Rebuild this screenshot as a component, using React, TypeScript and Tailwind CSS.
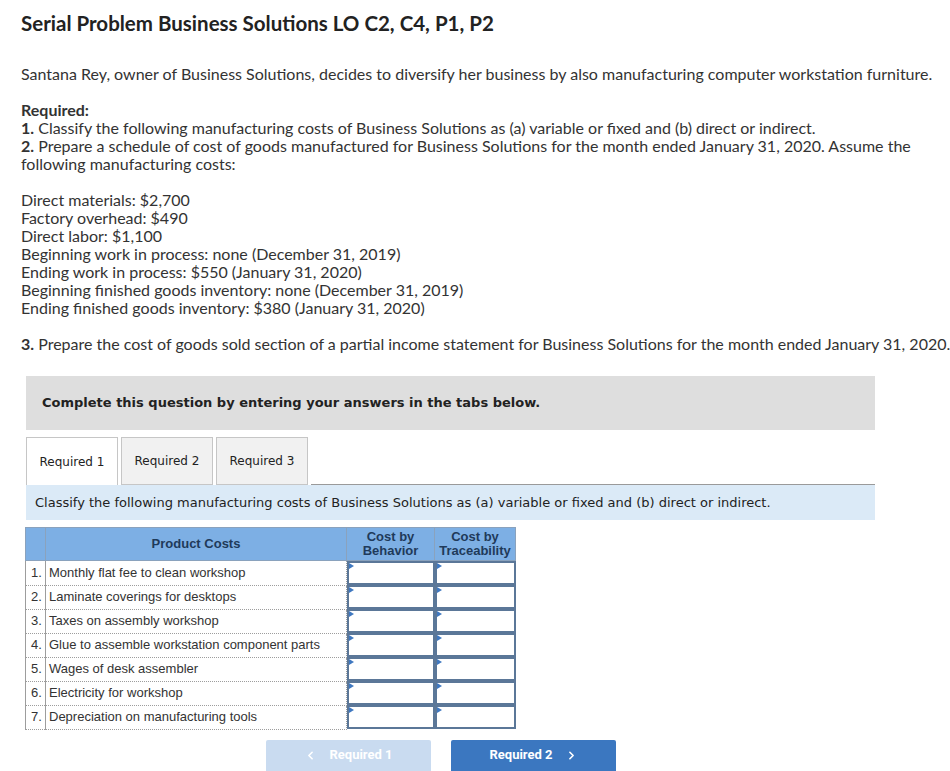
import React from "react";
import { ChevronLeft, ChevronRight } from "lucide-react";

const costs = [
  "Monthly flat fee to clean workshop",
  "Laminate coverings for desktops",
  "Taxes on assembly workshop",
  "Glue to assemble workstation component parts",
  "Wages of desk assembler",
  "Electricity for workshop",
  "Depreciation on manufacturing tools",
];

const givens = [
  "Direct materials: $2,700",
  "Factory overhead: $490",
  "Direct labor: $1,100",
  "Beginning work in process: none (December 31, 2019)",
  "Ending work in process: $550 (January 31, 2020)",
  "Beginning finished goods inventory: none (December 31, 2019)",
  "Ending finished goods inventory: $380 (January 31, 2020)",
];

function InputCell() {
  return (
    <td className="p-0">
      <div className="relative h-[24px] border-2 border-[#5b7798] bg-white">
        <span className="absolute left-0 top-0 h-0 w-0 border-y-[3px] border-l-[5px] border-y-transparent border-l-[#3f78c0]" />
      </div>
    </td>
  );
}

export default function App() {
  return (
    <div className="min-h-[771px] bg-white pl-[21px] pt-[11px] text-[16px] leading-[18px] text-[#333]" style={{ fontFamily: "Lato, 'Open Sans', sans-serif" }}>
      <h1 className="text-[20.5px] font-bold leading-[24px] text-[#222]">
        Serial Problem Business Solutions LO C2, C4, P1, P2
      </h1>

      <p className="mt-[30px] whitespace-nowrap">
        Santana Rey, owner of Business Solutions, decides to diversify her business by also manufacturing computer workstation furniture.
      </p>

      <div className="mt-[18px] whitespace-nowrap">
        <div className="font-bold">Required:</div>
        <div>
          <b>1.</b> Classify the following manufacturing costs of Business Solutions as (a) variable or fixed and (b) direct or indirect.
        </div>
        <div>
          <b>2.</b> Prepare a schedule of cost of goods manufactured for Business Solutions for the month ended January 31, 2020. Assume the
        </div>
        <div>following manufacturing costs:</div>
      </div>

      <div className="mt-[18px] whitespace-nowrap">
        {givens.map((g) => (
          <div key={g}>{g}</div>
        ))}
      </div>

      <div className="mt-[18px] whitespace-nowrap">
        <b>3.</b> Prepare the cost of goods sold section of a partial income statement for Business Solutions for the month ended January 31, 2020.
      </div>

      {/* question box */}
      <div className="ml-[5px] w-[849px]" style={{ fontFamily: "'DejaVu Sans', Verdana, sans-serif" }}>
        <div className="mt-[23px] flex h-[54px] items-center bg-[#dedede] pl-[16px] text-[13px] font-bold text-[#222]">
          Complete this question by entering your answers in the tabs below.
        </div>

        <div className="mt-[7px] flex gap-[3px] text-[12px] text-[#222]">
          <div className="flex h-[48px] w-[92px] items-center justify-center border border-b-0 border-[#c6c6c6] bg-white">
            Required 1
          </div>
          <div className="flex h-[48px] w-[92px] items-center justify-center border border-[#c6c6c6] bg-[#f1f1f1]">
            Required 2
          </div>
          <div className="flex h-[48px] w-[92px] items-center justify-center border border-[#c6c6c6] bg-[#f1f1f1]">
            Required 3
          </div>
          <div className="flex-1 border-b border-[#9a9a9a]" />
        </div>

        <div className="flex h-[35px] items-center bg-[#dbeaf7] pl-[9px] text-[13px] text-[#222]">
          Classify the following manufacturing costs of Business Solutions as (a) variable or fixed and (b) direct or indirect.
        </div>
      </div>

      {/* table */}
      <table
        className="ml-[4px] mt-[7px] border-collapse text-[13px] text-[#333]"
        style={{ fontFamily: "'Liberation Sans', Arial, sans-serif" }}
      >
        <thead>
          <tr className="h-[33px] bg-[#7dafe4] text-[13px] leading-[14px] text-[#1f3a5a]">
            <th className="w-[20px] border border-[#8aa2bd]" />
            <th className="w-[301px] border border-[#8aa2bd] font-bold">Product Costs</th>
            <th className="w-[88px] border border-[#8aa2bd] font-bold">
              Cost by
              <br />
              Behavior
            </th>
            <th className="w-[81px] border border-[#8aa2bd] font-bold">
              Cost by
              <br />
              Traceability
            </th>
          </tr>
        </thead>
        <tbody>
          {costs.map((c, i) => (
            <tr key={c} className="h-[24px]">
              <td className="border-y border-l border-dotted border-[#9d9d9d] pl-[5px] text-left [border-left-style:solid]">{i + 1}.</td>
              <td className="border border-dotted border-[#9d9d9d] pl-[3px] [border-left-style:solid]">{c}</td>
              <InputCell />
              <InputCell />
            </tr>
          ))}
        </tbody>
      </table>

      {/* nav buttons */}
      <div className="ml-[245px] mt-[10px] flex gap-[20px] text-[13px] font-bold text-white" style={{ fontFamily: "Roboto, Arial, sans-serif" }}>
        <div className="flex h-[31px] w-[165px] items-center justify-center gap-[12px] rounded-t-[2px] bg-[#c9dbf0]">
          <ChevronLeft size={13} strokeWidth={3} />
          <span>Required 1</span>
        </div>
        <div className="flex h-[31px] w-[165px] items-center justify-center gap-[12px] rounded-t-[2px] bg-[#3b77c0]">
          <span>Required 2</span>
          <ChevronRight size={13} strokeWidth={3} />
        </div>
      </div>
    </div>
  );
}
